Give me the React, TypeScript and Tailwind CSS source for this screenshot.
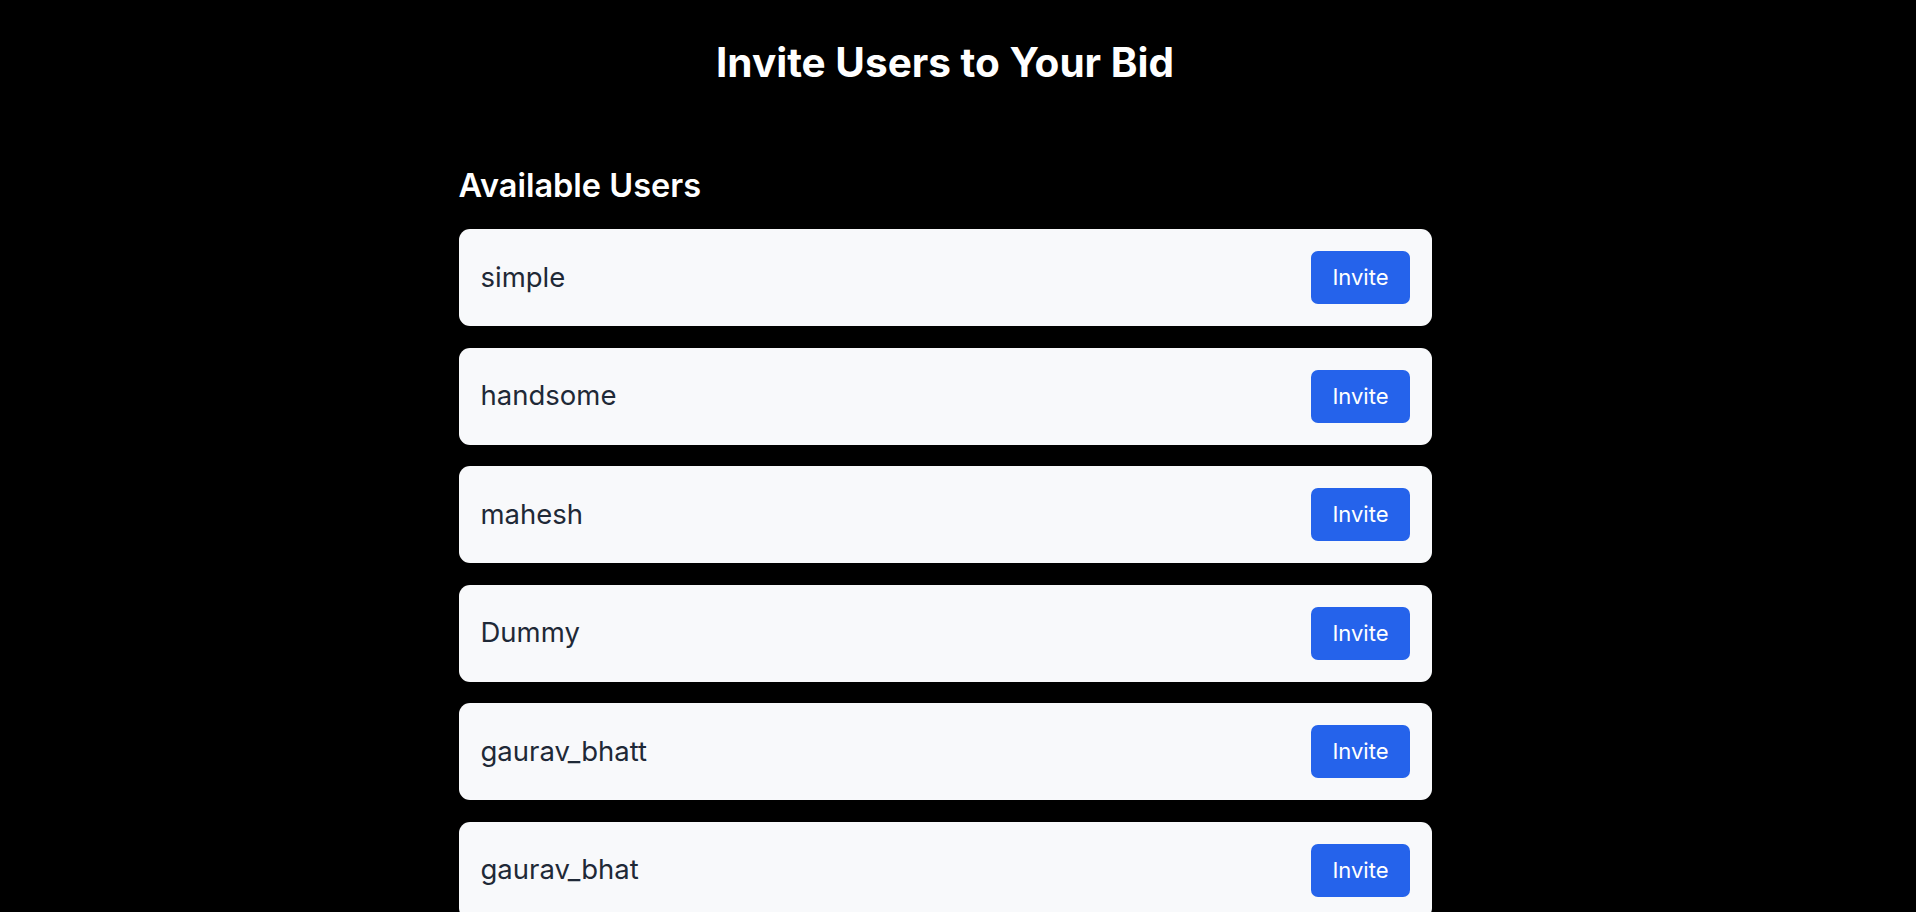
import React from "react";

// --- USERS ---
const users = ["simple", "handsome", "mahesh", "Dummy", "gaurav_bhatt", "gaurav_bhat"];

export default function App() {
  return (
    <div className="min-h-screen bg-black font-['Inter',sans-serif] pb-20 pr-[26px]">
      {/* Header */}
      <h1 className="pt-[43px] text-center text-[40.5px] leading-[40px] font-bold text-white">
        Invite Users to Your Bid
      </h1>

      {/* User list */}
      <div className="mx-auto mt-[86px] w-[973px]">
        <h2 className="text-[32.5px] leading-[33px] font-semibold text-white">Available Users</h2>

        <div className="mt-[27px] flex flex-col gap-[21.5px]">
          {users.map((name) => (
            <div
              key={name}
              className="flex items-center justify-between rounded-[11px] bg-[#f8f9fb] p-[22px]"
            >
              <span className="text-[27.5px] text-[#1f2937]">{name}</span>
              <button className="h-[53px] rounded-[7px] bg-[#2563eb] px-[21px] text-[22px] text-white">
                Invite
              </button>
            </div>
          ))}
        </div>
      </div>
    </div>
  );
}
